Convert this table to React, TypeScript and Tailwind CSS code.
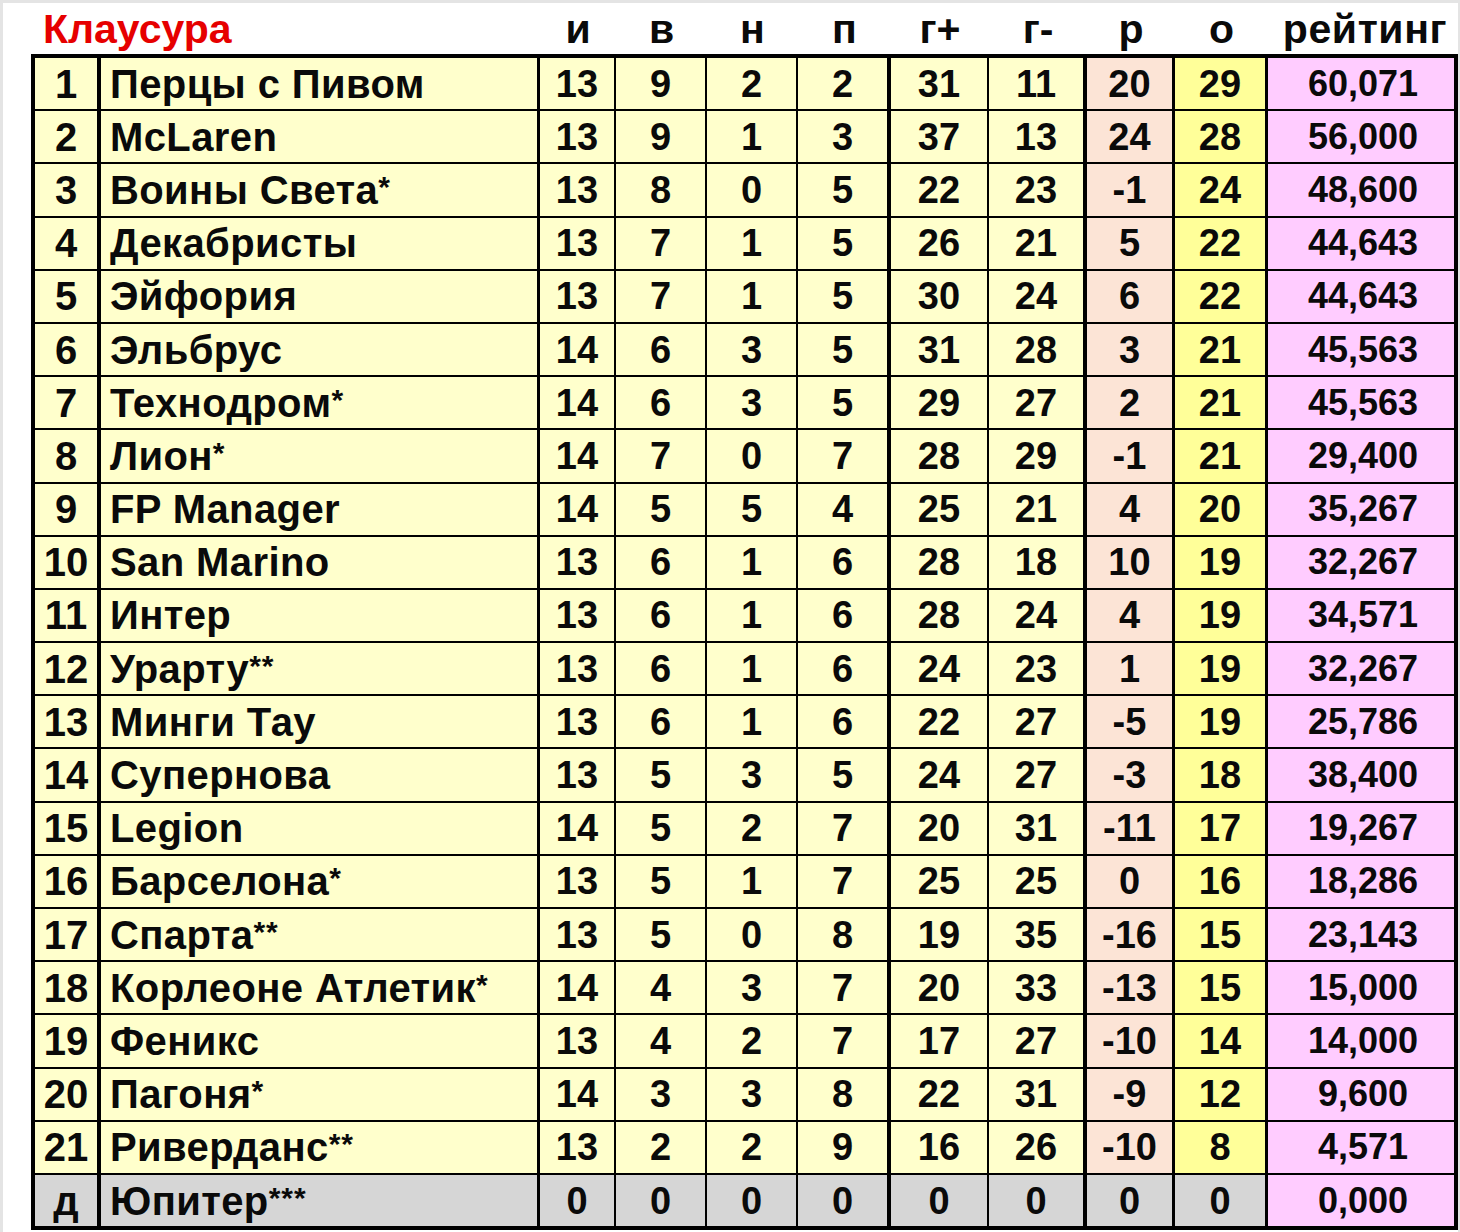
import React from "react";

type Row = [string, string, string, string, string, string, string, string, string, string, string];

const rows: Row[] = [
  ["1", "Перцы с Пивом", "13", "9", "2", "2", "31", "11", "20", "29", "60,071"],
  ["2", "McLaren", "13", "9", "1", "3", "37", "13", "24", "28", "56,000"],
  ["3", "Воины Света*", "13", "8", "0", "5", "22", "23", "-1", "24", "48,600"],
  ["4", "Декабристы", "13", "7", "1", "5", "26", "21", "5", "22", "44,643"],
  ["5", "Эйфория", "13", "7", "1", "5", "30", "24", "6", "22", "44,643"],
  ["6", "Эльбрус", "14", "6", "3", "5", "31", "28", "3", "21", "45,563"],
  ["7", "Технодром*", "14", "6", "3", "5", "29", "27", "2", "21", "45,563"],
  ["8", "Лион*", "14", "7", "0", "7", "28", "29", "-1", "21", "29,400"],
  ["9", "FP Manager", "14", "5", "5", "4", "25", "21", "4", "20", "35,267"],
  ["10", "San Marino", "13", "6", "1", "6", "28", "18", "10", "19", "32,267"],
  ["11", "Интер", "13", "6", "1", "6", "28", "24", "4", "19", "34,571"],
  ["12", "Урарту**", "13", "6", "1", "6", "24", "23", "1", "19", "32,267"],
  ["13", "Минги Тау", "13", "6", "1", "6", "22", "27", "-5", "19", "25,786"],
  ["14", "Супернова", "13", "5", "3", "5", "24", "27", "-3", "18", "38,400"],
  ["15", "Legion", "14", "5", "2", "7", "20", "31", "-11", "17", "19,267"],
  ["16", "Барселона*", "13", "5", "1", "7", "25", "25", "0", "16", "18,286"],
  ["17", "Спарта**", "13", "5", "0", "8", "19", "35", "-16", "15", "23,143"],
  ["18", "Корлеоне Атлетик*", "14", "4", "3", "7", "20", "33", "-13", "15", "15,000"],
  ["19", "Феникс", "13", "4", "2", "7", "17", "27", "-10", "14", "14,000"],
  ["20", "Пагоня*", "14", "3", "3", "8", "22", "31", "-9", "12", "9,600"],
  ["21", "Риверданс**", "13", "2", "2", "9", "16", "26", "-10", "8", "4,571"],
  ["д", "Юпитер***", "0", "0", "0", "0", "0", "0", "0", "0", "0,000"],
];

const colClass = [
  "w-[66px] border-r-[4px] justify-center text-[40px]",
  "w-[439px] border-r-[3px] justify-start pl-[9px] text-[40px] tracking-[0.4px]",
  "w-[76px] border-r-[2px] justify-center",
  "w-[91px] border-r-[2px] justify-center",
  "w-[91px] border-r-[2px] justify-center",
  "w-[93px] border-r-[4px] justify-center",
  "w-[98px] border-r-[2px] justify-center",
  "w-[98px] border-r-[4px] justify-center",
  "w-[88px] border-r-[3px] justify-center",
  "w-[93px] border-r-[3px] justify-center",
  "w-[186px] justify-center text-[36px] pl-[4px]",
];

const headerCols: [string, string][] = [
  ["и", "w-[76px]"],
  ["в", "w-[91px]"],
  ["н", "w-[91px]"],
  ["п", "w-[93px]"],
  ["г+", "w-[98px]"],
  ["г-", "w-[98px]"],
  ["р", "w-[88px]"],
  ["о", "w-[93px]"],
  ["рейтинг", "w-[190px] pl-[4px] tracking-[0.6px]"],
];

function cellBg(col: number, gray: boolean): string {
  if (col === 10) return "bg-[#ffccff]";
  if (gray) return "bg-[#d6d6d6]";
  if (col === 8) return "bg-[#fce4d6]";
  if (col === 9) return "bg-[#ffff99]";
  return "bg-[#ffffcc]";
}

function Name({ text }: { text: string }) {
  const m = text.match(/^(.*?)(\**)$/);
  const base = m ? m[1] : text;
  const stars = m ? m[2] : "";
  return (
    <span>
      {base}
      {stars && (
        <span className="relative -top-[7px] text-[30px] tracking-[1px]">{stars}</span>
      )}
    </span>
  );
}

export default function App() {
  return (
    <div
      className="w-[1460px] h-[1232px] overflow-hidden bg-[#e4e4e4] pt-[3px] pl-[3px] text-[#0a0a0a]"
      style={{ fontFamily: '"Liberation Sans", Arial, sans-serif' }}
    >
      <div className="w-[1455px] h-[1229px] bg-white pl-[28px] font-bold">
        <div className="flex h-[51px] pt-[6px] leading-[40px] text-[41px]">
          <div className="w-[509px] pl-[12px] text-[#e60000]">Клаусура</div>
          {headerCols.map(([t, w], i) => (
            <div key={i} className={`${w} text-center`}>
              {t}
            </div>
          ))}
        </div>
        <div className="w-[1427px] border-[4px] border-black text-[38px] leading-none">
          {rows.map((r, ri) => {
            const gray = ri === rows.length - 1;
            return (
              <div
                key={ri}
                className={`flex ${gray ? "h-[51.2px]" : "h-[53.2px] border-b-[2px]"} border-black`}
              >
                {r.map((v, ci) => (
                  <div
                    key={ci}
                    className={`flex items-center border-black whitespace-nowrap ${colClass[ci]} ${cellBg(ci, gray)}`}
                  >
                    {ci === 1 ? <Name text={v} /> : v}
                  </div>
                ))}
              </div>
            );
          })}
        </div>
      </div>
    </div>
  );
}
